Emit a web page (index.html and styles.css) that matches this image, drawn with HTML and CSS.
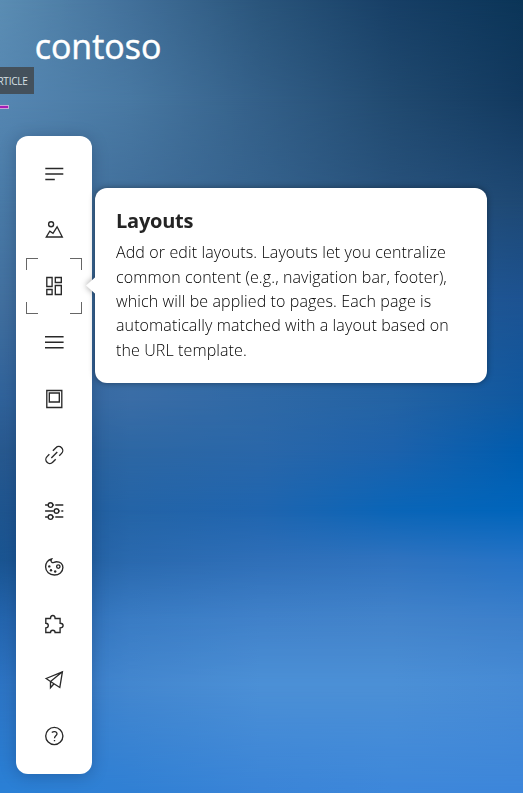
FILE: index.html
```html
<!DOCTYPE html>
<html lang="en">
<head>
<meta charset="utf-8">
<title>contoso</title>
<link rel="stylesheet" href="styles.css">
</head>
<body>
<div class="backdrop" aria-hidden="true">
<i class="band b0"></i><i class="band b1"></i><i class="band b2"></i><i class="band b3"></i><i class="band b4"></i><i class="band b5"></i><i class="band b6"></i><i class="band b7"></i><i class="band b8"></i><i class="band b9"></i><i class="band b10"></i>
</div>
<header class="header">
<svg class="logo" width="140" height="40" viewBox="0 0 140 40"><text x="-1.500" y="31.500" textLength="129.500" lengthAdjust="spacingAndGlyphs">contoso</text></svg>
<div class="tag">ARTICLE</div>
<div class="marker"></div>
</header>
<nav class="toolbar">
<button class="tool"><svg viewBox="0 0 20 20"><path d="M1 4.500h18M1 10h18M1 15.500h9.500"/></svg></button>
<button class="tool"><svg viewBox="0 0 20 20"><circle cx="6.800" cy="4.200" r="2.500"/><path d="M2 17h16L12.800 6.800 8.700 13.400 5.500 11.200z"/></svg></button>
<button class="tool selected"><span class="corners"></span><svg viewBox="0 0 20 20"><path d="M2.500 1.500h5.300v9H2.500zM11 1.500h6v5h-6zM2.500 13.500h5.300v5H2.500zM11 9.500h6v9h-6z"/></svg>
<div class="callout"><h2>Layouts</h2><p>Add or edit layouts. Layouts let you centralize<br>common content (e.g., navigation bar, footer),<br>which will be applied to pages. Each page is<br>automatically matched with a layout based on<br>the URL template.</p></div></button>
<button class="tool"><svg viewBox="0 0 20 20"><path d="M.7 3.700h18.600M.7 9.200h18.600M.7 14.700h18.600"/></svg></button>
<button class="tool"><svg viewBox="0 0 20 20"><path d="M2.500 1.500h15v17h-15zM5 4h10v9H5z"/></svg></button>
<button class="tool"><svg viewBox="0 0 20 20"><path transform="rotate(-45 10 10)" d="M5.800 10h8.400M12 6h4.300a4 4 0 0 1 0 8h-3.300M8 14H3.700a4 4 0 0 1 0-8h3.300"/></svg></button>
<button class="tool"><svg viewBox="0 0 20 20"><path d="M.8 4h2.800M8.800 4h1M11 4h8M.8 10h8.700M15 10h.8M17 10h2M.8 16h2.800M8.800 16h1M11 16h8"/><circle cx="6.200" cy="4" r="2.300"/><circle cx="12.200" cy="10" r="2.300"/><circle cx="6.200" cy="16" r="2.300"/></svg></button>
<button class="tool"><svg viewBox="0 0 20 20"><path d="M7.300 2C3.800 2.800 1.300 6 1.300 9.800c0 4.800 4 8.200 8.800 8.200 4.700 0 8.500-3.100 8.500-7.400 0-3.600-2.700-5.900-6.400-5.900-2.200 0-3.100 1.300-4.300.8C6.400 5 6.600 3 7.300 2z"/><circle cx="14" cy="9.600" r="1.700"/><g class="dots"><circle cx="5" cy="9.400" r="1.200"/><circle cx="6.700" cy="13.300" r="1.200"/><circle cx="10.900" cy="14.500" r="1.200"/></g></svg></button>
<button class="tool"><svg viewBox="0 0 20 20"><path d="M1.500 4.500h4.700C6.200 2.500 6.800 1.500 8.500 1.500s2.300 1 2.300 3h5v4.700c1.900 0 3 .7 3 2.300s-1.100 2.300-3 2.300v4.700h-5c0-1.600-.8-2.300-2.300-2.300s-2.300.7-2.300 2.300H1.500v-4.700c1.800 0 2.500-.8 2.500-2.300S3.300 9.200 1.500 9.200z"/></svg></button>
<button class="tool"><svg viewBox="0 0 20 20"><path d="M1.800 8.500 18.100 1.800 15.500 17.500 6.200 11.500zM18.100 1.800 6.200 11.500v6.300l3.500-4"/></svg></button>
<button class="tool"><svg viewBox="0 0 20 20"><circle cx="10" cy="10" r="8.600"/><path d="M7.500 6.500c1.800-1.500 5.200-1.200 5.200 1.200 0 2-2.500 2.300-2.500 4.500"/><path d="M10.200 14v1.300"/></svg></button>
</nav>
</body>
</html>
```
FILE: styles.css
```css
* { box-sizing: border-box; }
body { margin: 0; width: 523px; height: 793px; overflow: hidden; position: relative; font-family: "Open Sans", sans-serif; }

/* Each band fades in over the previous one to form a smooth colour field. */
.backdrop { position: absolute; inset: 0; z-index: -1; display: grid; }
.band { grid-area: 1 / 1; background: linear-gradient(90deg, var(--c)); mask-image: linear-gradient(transparent var(--from), #000 var(--to)); }
.b0 { --c: #5b8db3, #42709a, #2a557b, #173f66, #0b3558; --from: -2px; --to: -1px; }
.b1 { --c: #5687b2, #4878a2, #335f88, #214a70, #12395f; --from: 0px; --to: 100px; }
.b2 { --c: #4a7ba8, #416f9b, #35628d, #28527c, #1e4873; --from: 100px; --to: 200px; }
.b3 { --c: #42709f, #3c6d9f, #2f639a, #235a94, #1d5392; --from: 200px; --to: 300px; }
.b4 { --c: #30629a, #3a6da6, #2f69a6, #2463a4, #0f58a0; --from: 300px; --to: 400px; }
.b5 { --c: #28598f, #2d67a4, #2a67a9, #1d62ac, #005cae; --from: 400px; --to: 450px; }
.b6 { --c: #1f558f, #2464a7, #1f65af, #0a65b7, #0065bb; --from: 450px; --to: 510px; }
.b7 { --c: #1a5592, #2a69ae, #2f6fb8, #3073bf, #2573c6; --from: 510px; --to: 560px; }
.b8 { --c: #2465ae, #3a7cc4, #4182ca, #4384cb, #3d80cb; --from: 560px; --to: 620px; }
.b9 { --c: #2d74c4, #4487cf, #4c90d6, #4c90d6, #478bd5; --from: 620px; --to: 685px; }
.b10 { --c: #2a80d6, #3080d4, #3a84d7, #3d87da, #3d86da; --from: 685px; --to: 793px; }

.header { height: 136px; padding-top: 29px; }
.logo { display: block; margin-left: 34px; height: 38px; overflow: visible; transform: translate(-1.500px, .5px) scaleX(1.030); transform-origin: 0 0; }
.logo text { font: 400 37px "Open Sans", sans-serif; fill: #fff; stroke: #fff; stroke-width: .5px; }
.tag { width: 34px; height: 27px; padding-right: 6.500px; display: flex; align-items: center; justify-content: flex-end; overflow: hidden; background: #44515c; color: #d9e0e6; font-size: 10px; letter-spacing: -.25px; }
.marker { width: 9px; height: 4px; margin-top: 10.500px; background: #a51cb5; border: 1px solid #c9a5d8; border-left: 0; }

.toolbar { width: 76px; height: 638px; margin-left: 16px; padding: 10px; display: flex; flex-direction: column; background: #fff; border-radius: 12px; box-shadow: 0 2px 16px rgba(0, 20, 50, .25); }
.tool { position: relative; flex: 1; display: grid; place-items: center; padding: 0; border: 0; background: none; font: inherit; text-align: left; }
.tool > svg { width: 20px; height: 20px; transform: translateX(.3px); fill: none; stroke: #292929; stroke-width: 1.350; }
.tool .dots { fill: #292929; stroke: none; }
.corners { position: absolute; inset: 0; --l: linear-gradient(#666, #666);
  background: var(--l) 0 0 / 12px 1px, var(--l) 0 0 / 1px 12px, var(--l) 100% 0 / 12px 1px, var(--l) 100% 0 / 1px 12px, var(--l) 0 100% / 12px 1px, var(--l) 0 100% / 1px 12px, var(--l) 100% 100% / 12px 1px, var(--l) 100% 100% / 1px 12px; background-repeat: no-repeat; height: 56px; }
.callout { position: absolute; z-index: 1; left: 69px; top: -70px; width: 392px; height: 195px; padding: 18px 21px; background: #fff; border-radius: 12px; filter: drop-shadow(0 0 3px rgba(0, 0, 0, .4)); color: #242424; }
.callout::before { content: ""; position: absolute; left: -9px; top: 88px; width: 10px; height: 18px; background: #fff; clip-path: polygon(100% 0, 0 50%, 100% 100%); }
.callout h2 { margin: 0; font-size: 20px; line-height: 30px; font-weight: 700; letter-spacing: -.25px; }
.callout p { margin: 3.800px 0 0; font-size: 16px; line-height: 24.400px; font-weight: 300; letter-spacing: .115px; white-space: nowrap; color: #000; }
```
